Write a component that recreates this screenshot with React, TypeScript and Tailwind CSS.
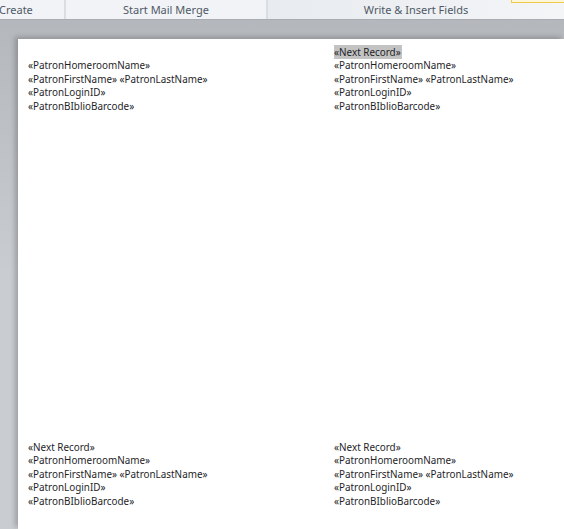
import React from "react";

const fields = [
  "«PatronHomeroomName»",
  "«PatronFirstName» «PatronLastName»",
  "«PatronLoginID»",
  "«PatronBIblioBarcode»",
];

function LabelBlock({ next, highlight }: { next: "blank" | "show"; highlight?: boolean }) {
  return (
    <div className="flex flex-col">
      {next === "blank" && <div className="h-[13.5px]" />}
      {next === "show" && (
        <div className="h-[13.5px]">
          <span className={highlight ? "bg-[#c3c3c3] pr-px" : ""}>«Next Record»</span>
        </div>
      )}
      {fields.map((f) => (
        <div key={f} className="h-[13.5px] whitespace-nowrap">
          {f}
        </div>
      ))}
    </div>
  );
}

export default function App() {
  return (
    <div
      className="w-[564px] h-[529px] overflow-hidden flex flex-col bg-[#c7cacf]"
      style={{ fontFamily: '"Noto Sans", "Open Sans", sans-serif' }}
    >
      {/* ribbon group labels */}
      <div className="h-[20px] flex shrink-0 bg-[#f1f3f6] border-b border-[#a9adb3] text-[11px] text-[#4f5966] leading-[20px]">
        <div className="w-[66px] border-r-2 border-[#dadde2] overflow-hidden">
          <span className="block -ml-[1px]">Create</span>
        </div>
        <div className="w-[202px] text-center border-r-2 border-[#dadde2]">Start Mail Merge</div>
        <div className="flex-1 relative text-center bg-gradient-to-r from-[#e8ebef] to-[#f3f5f7]">
          Write &amp; Insert Fields
          <div className="absolute right-0 top-0 w-[53px] h-[3px] border-l border-b border-[#f1c94a] bg-[#fdf6d8]" />
        </div>
      </div>

      {/* document area */}
      <div className="flex-1 bg-gradient-to-b from-[#b4b7bc] via-[#c9ccd1] to-[#c9ccd1] pt-[19px] pl-[18px]">
        <div className="h-full bg-white shadow-[-3px_-2px_5px_rgba(0,0,0,0.22)] pl-[10px] pt-[6.5px] text-[9.9px] leading-[13.5px] text-[#1e1e28]">
          <div className="grid grid-cols-[306px_1fr] grid-rows-[395px_auto]">
            <LabelBlock next="blank" />
            <LabelBlock next="show" highlight />
            <LabelBlock next="show" />
            <LabelBlock next="show" />
          </div>
        </div>
      </div>
    </div>
  );
}
